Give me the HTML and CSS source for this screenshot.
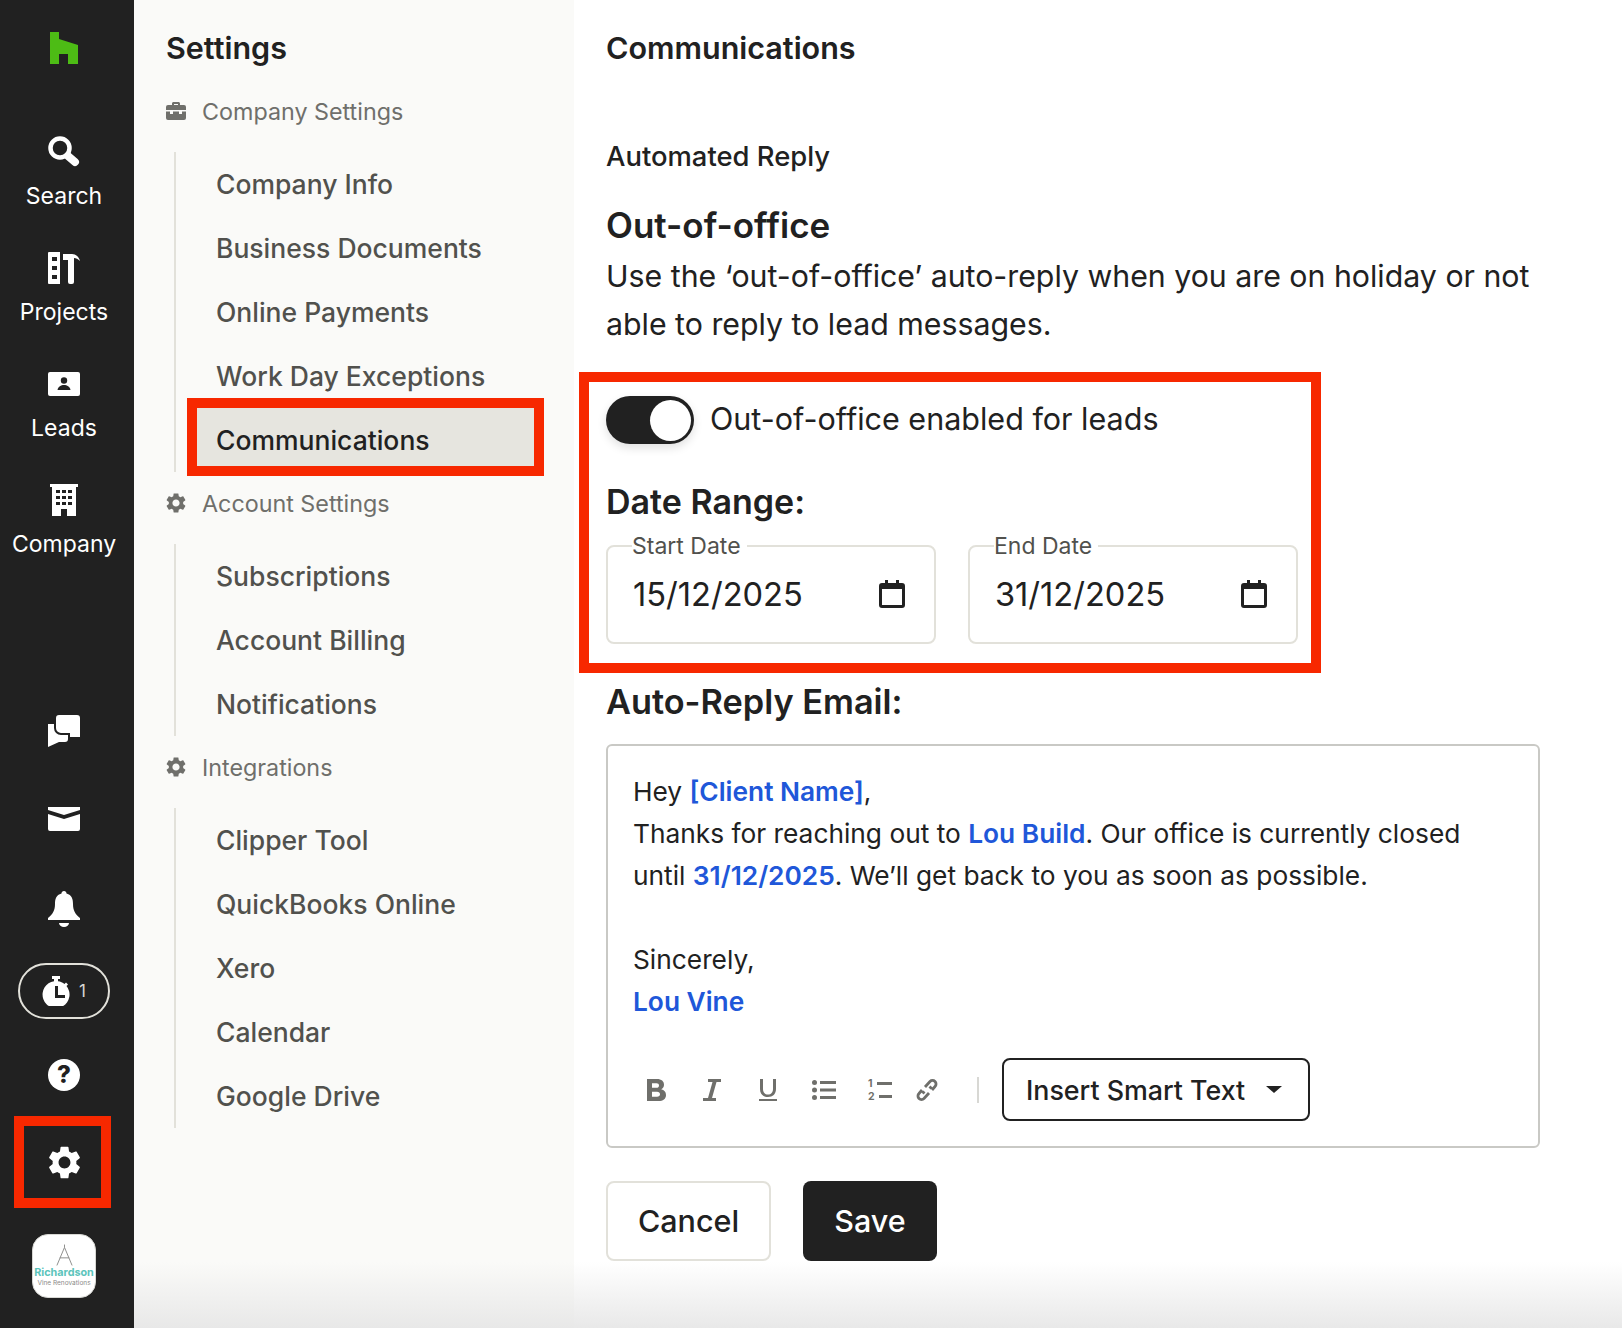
FILE: index.html
```html
<!DOCTYPE html>
<html lang="en">
<head>
    <meta charset="UTF-8">
    <meta name="viewport" content="width=device-width, initial-scale=1.0">
    <title>Communications</title>
    <link rel="stylesheet" href="styles.css">
</head>
<body>
    <svg class="defs" width="0" height="0">
        <symbol id="gear" viewBox="2.5 2 19 20"><path d="M19.14 12.94c.04-.3.06-.61.06-.94 0-.32-.02-.64-.07-.94l2.03-1.58c.18-.14.23-.41.12-.61l-1.92-3.32c-.12-.22-.37-.29-.59-.22l-2.39.96c-.5-.38-1.03-.7-1.62-.94l-.36-2.54c-.04-.24-.24-.41-.48-.41h-3.84c-.24 0-.43.17-.47.41l-.36 2.54c-.59.24-1.13.57-1.62.94l-2.39-.96c-.22-.08-.47 0-.59.22L2.74 8.87c-.12.21-.08.47.12.61l2.03 1.58c-.05.3-.09.63-.09.94s.02.64.07.94l-2.03 1.58c-.18.14-.23.41-.12.61l1.92 3.32c.12.22.37.29.59.22l2.39-.96c.5.38 1.03.7 1.62.94l.36 2.54c.05.24.24.41.48.41h3.84c.24 0 .44-.17.47-.41l.36-2.54c.59-.24 1.13-.56 1.62-.94l2.39.96c.22.08.47 0 .59-.22l1.92-3.32c.12-.22.07-.47-.12-.61l-2.01-1.58zM12 15.6c-1.98 0-3.6-1.62-3.6-3.6s1.62-3.6 3.6-3.6 3.6 1.62 3.6 3.6-1.62 3.6-3.6 3.6z"/></symbol>
        <symbol id="calendar" viewBox="0 0 26 28"><path d="M6 0h3v3h8V0h3v3h3a3 3 0 0 1 3 3v19a3 3 0 0 1-3 3H3a3 3 0 0 1-3-3V6a3 3 0 0 1 3-3h3zM3 9v16h20V9z"/></symbol>
    </svg>

    <div class="app">
        <nav class="rail">
            <svg class="logo" viewBox="0 0 28 32"><path d="M0 0h9v7l19 6v19H18V22H9v10H0z"/></svg>
            <a class="rail-link first">
                <svg class="rail-icon" viewBox="0 0 32 32"><circle cx="12" cy="12" r="9.500" fill="none" stroke="#fff" stroke-width="4.500"/><path d="M20 20l7 6" stroke="#fff" stroke-width="8" stroke-linecap="round"/></svg>
                <span>Search</span>
            </a>
            <a class="rail-link">
                <svg class="rail-icon" viewBox="0 0 32 32"><path fill-rule="evenodd" d="M1 0h11v32H1a1 1 0 0 1-1-1V1a1 1 0 0 1 1-1zm3 5v4h5V5zm0 9v4h5v-4zm0 9v4h5v-4z"/><path d="M15 2h9c4 0 7 3 8 7-2-2-4-3-6-3v24a2 2 0 0 1-2 2h-2a2 2 0 0 1-2-2V8h-5z"/></svg>
                <span>Projects</span>
            </a>
            <a class="rail-link">
                <svg class="rail-icon" viewBox="0 0 32 24"><rect width="32" height="24" rx="2"/><circle cx="16" cy="8.500" r="3.200" fill="#212121"/><path d="M9.500 18c.5-3.500 3.500-5 6.500-5s6 1.500 6.500 5z" fill="#212121"/></svg>
                <span>Leads</span>
            </a>
            <a class="rail-link">
                <svg class="rail-icon" viewBox="0 0 32 32"><path fill-rule="evenodd" d="M2 0h28v3h-2v29H19v-7h-6v7H4V3H2zm6 6v3h4V6zm6 0v3h4V6zm6 0v3h4V6zM8 12v3h4v-3zm6 0v3h4v-3zm6 0v3h4v-3zM8 18v3h4v-3zm6 0v3h4v-3zm6 0v3h4v-3z"/></svg>
                <span>Company</span>
            </a>

            <div class="rail-bottom">
                <svg class="rail-icon chat" viewBox="0 0 32 32"><path d="M11 0h18a3 3 0 0 1 3 3v19H22v-4h-9a5 5 0 0 1-5-5V3a3 3 0 0 1 3-3z"/><path d="M0 9h6v4a7 7 0 0 0 7 7h7v4a3 3 0 0 1-3 3h-6L0 32z"/></svg>
                <svg class="rail-icon mail" viewBox="0 0 32 24"><path d="M0 0h32v3L16 8 0 3z"/><path d="M0 7l16 5 16-5v15a2 2 0 0 1-2 2H2a2 2 0 0 1-2-2z"/></svg>
                <svg class="rail-icon bell" viewBox="0 0 32 36"><path d="M16 0c1.500 0 2.500 1 2.500 2.500C24 4 25 8 25 13c0 6 2 10 7 14v2H0v-2c5-4 7-8 7-14 0-5 1-9 6.500-10.500C13.500 1 14.500 0 16 0z"/><path d="M11 32h10a5 4 0 0 1-10 0z"/></svg>
                <div class="timer">
                    <svg class="timer-icon" viewBox="0 0 28 30"><path d="M10 0h8v3h-2v2.200c2.500.3 4.700 1.300 6.500 2.800l1.500-1.500 2 2-1.500 1.500A13.500 13.500 0 1 1 12 5.200V3h-2z"/><path d="M13 10h3v9h7v3H13z" fill="#212121"/></svg>
                    <span>1</span>
                </div>
                <div class="help">?</div>
                <div class="rail-gear"><svg class="gear-icon"><use href="#gear"/></svg></div>
                <div class="avatar">
                    <svg class="compass" viewBox="0 0 20 24"><path d="M10 1v3M10 4L2 23M10 4l8 19M5 15h10" fill="none" stroke="#8a8a88" stroke-width="1"/></svg>
                    <div class="brand">Richardson</div>
                    <div class="brand-sub">Vine Renovations</div>
                </div>
            </div>
        </nav>

        <aside class="settings">
            <h2>Settings</h2>

            <div class="group-title">
                <svg class="group-icon" viewBox="0 0 20 18"><path d="M6 3V1.500C6 .7 6.700 0 7.500 0h5c.8 0 1.500.7 1.500 1.500V3h4a2 2 0 0 1 2 2v3H0V5a2 2 0 0 1 2-2zm2-1v1h4V2z"/><path d="M0 9.500h4V12h3V9.500h6V12h3V9.500h4V16a2 2 0 0 1-2 2H2a2 2 0 0 1-2-2z"/></svg>
                Company Settings
            </div>
            <ul class="menu">
                <li>Company Info</li>
                <li>Business Documents</li>
                <li>Online Payments</li>
                <li>Work Day Exceptions</li>
                <li class="active">Communications</li>
            </ul>

            <div class="group-title">
                <svg class="group-icon"><use href="#gear"/></svg>
                Account Settings
            </div>
            <ul class="menu">
                <li>Subscriptions</li>
                <li>Account Billing</li>
                <li>Notifications</li>
            </ul>

            <div class="group-title">
                <svg class="group-icon"><use href="#gear"/></svg>
                Integrations
            </div>
            <ul class="menu">
                <li>Clipper Tool</li>
                <li>QuickBooks Online</li>
                <li>Xero</li>
                <li>Calendar</li>
                <li>Google Drive</li>
            </ul>
        </aside>

        <main class="content">
            <h2>Communications</h2>
            <h3 class="sub">Automated Reply</h3>
            <h1>Out-of-office</h1>
            <p class="intro">Use the ‘out-of-office’ auto-reply when you are on holiday or not able to reply to lead messages.</p>

            <section class="marked">
                <div class="toggle-row">
                    <div class="toggle"><div class="knob"></div></div>
                    <span>Out-of-office enabled for leads</span>
                </div>
                <h4 class="date-title">Date Range:</h4>
                <div class="dates">
                    <fieldset class="date-field">
                        <legend>Start Date</legend>
                        <span>15/12/2025</span>
                        <svg class="cal"><use href="#calendar"/></svg>
                    </fieldset>
                    <fieldset class="date-field">
                        <legend>End Date</legend>
                        <span>31/12/2025</span>
                        <svg class="cal"><use href="#calendar"/></svg>
                    </fieldset>
                </div>
            </section>

            <h4 class="email-title">Auto-Reply Email:</h4>
            <div class="editor">
                <div class="body-text">
                    <div>Hey <b>[Client Name]</b>,</div>
                    <div>Thanks for reaching out to <b>Lou Build</b>. Our office is currently closed</div>
                    <div>until <b>31/12/2025</b>. We’ll get back to you as soon as possible.</div>
                    <div class="spacer"></div>
                    <div>Sincerely,</div>
                    <div><b>Lou Vine</b></div>
                </div>
                <div class="toolbar">
                    <svg class="tool t-b" viewBox="0 0 19 22"><path fill-rule="evenodd" d="M0 0h10c4.500 0 7 2.300 7 5.700 0 2.200-1.100 3.800-2.800 4.600 2.900.8 4.800 2.700 4.800 5.600 0 3.900-3 6.100-7.500 6.100H0zm5 4.300v4.500h4.500c1.500 0 2.500-.9 2.500-2.300s-1-2.200-2.500-2.200zm0 8.500v5h5c1.900 0 3-1 3-2.500s-1.100-2.500-3-2.500z"/></svg>
                    <svg class="tool t-i" viewBox="0 0 18 22"><path d="M5 0h13v3h-4.500L9 19h4v3H0v-3h5L9.500 3H5z"/></svg>
                    <svg class="tool t-u" viewBox="0 0 18 22"><path d="M1 0h3v10c0 3.500 2 5.500 5 5.500s5-2 5-5.500V0h3v10c0 5-3.200 8-8 8s-8-3-8-8zM0 20h18v2H0z"/></svg>
                    <svg class="tool t-ul" viewBox="0 0 24 20"><circle cx="2.500" cy="2.500" r="2.500"/><circle cx="2.500" cy="10" r="2.500"/><circle cx="2.500" cy="17.500" r="2.500"/><path d="M8 1h16v3H8zM8 8.500h16v3H8zM8 16h16v3H8z"/></svg>
                    <div class="tool t-ol">
                        <div class="ol-row"><span>1</span><i></i></div>
                        <div class="ol-row"><span>2</span><i></i></div>
                    </div>
                    <svg class="tool t-link" viewBox="0 0 22 24"><path d="M9 9l5-5.500a3.500 3.500 0 0 1 5 5l-3 3.500M13 15l-5 5.500a3.500 3.500 0 0 1-5-5L6 12M8.500 15.500l-2-2M13.500 8.500l2 2" fill="none" stroke="#6f6f6b" stroke-width="2.800"/></svg>
                    <div class="tool-sep"></div>
                    <button class="smart">Insert Smart Text<i class="caret"></i></button>
                </div>
            </div>

            <div class="actions">
                <button class="cancel">Cancel</button>
                <button class="save">Save</button>
            </div>
        </main>
    </div>
    <div class="fade"></div>
</body>
</html>
```

FILE: styles.css
```css
* {
    box-sizing: border-box;
}
body {
    margin: 0;
    font-family: Inter, "Liberation Sans", sans-serif;
    color: #212121;
    background: #fff;
}
.defs {
    position: absolute;
}
.app {
    display: flex;
    height: 1328px;
    overflow: hidden;
}
h1, h2, h3, h4, p, ul {
    margin: 0;
    padding: 0;
}
h2 {
    font-size: 30.5px;
    font-weight: 600;
    line-height: 36px;
    padding-top: 30px;
}

/* left rail */
.rail {
    width: 134px;
    flex: none;
    background: #212121;
    color: #fff;
    display: flex;
    flex-direction: column;
    align-items: center;
    padding-right: 6px;
    fill: #fff;
}
.logo {
    width: 28px;
    height: 32px;
    margin-top: 32px;
    fill: #4dbc15;
}
.rail-link {
    display: flex;
    flex-direction: column;
    align-items: center;
    height: 116px;
    font-size: 23px;
    font-weight: 400;
}
.rail-link.first {
    margin-top: 72px;
}
.rail-link .rail-icon {
    height: 32px;
}
.rail-link span {
    margin-top: 12px;
    line-height: 32px;
}
.rail-icon {
    width: 32px;
    height: 32px;
}
.rail-link:nth-of-type(3) .rail-icon {
    height: 24px;
    margin: 4px 0;
}
.rail-bottom {
    margin-top: auto;
    padding-bottom: 30px;
    display: flex;
    flex-direction: column;
    align-items: center;
}
.mail {
    height: 24px;
    margin-top: 60px;
}
.bell {
    height: 36px;
    margin-top: 60px;
}
.timer {
    margin-top: 36px;
    width: 92px;
    height: 56px;
    border: 2px solid #e2e1da;
    border-radius: 28px;
    display: flex;
    align-items: center;
    justify-content: center;
    gap: 9px;
    font-size: 17px;
    color: #d8d8d4;
}
.timer-icon {
    width: 28px;
    height: 30px;
}
.help {
    margin-top: 40px;
    width: 32px;
    height: 32px;
    border-radius: 50%;
    background: #fff;
    color: #212121;
    font-size: 24px;
    font-weight: 800;
    line-height: 32px;
    text-align: center;
}
.rail-gear {
    margin: 35px 0 0 -4px;
    padding-left: 4px;
    width: 77px;
    height: 72px;
    display: flex;
    align-items: center;
    justify-content: center;
    outline: 10px solid #f72800;
}
.gear-icon {
    width: 33px;
    height: 33px;
}
.avatar {
    margin-top: 36px;
    width: 64px;
    height: 64px;
    border-radius: 16px;
    background: #fff;
    border: 1px solid #d8d8d4;
    display: flex;
    flex-direction: column;
    align-items: center;
    overflow: hidden;
    padding-top: 8px;
}
.compass {
    width: 19px;
    height: 24px;
    flex: none;
}
.brand {
    font-size: 10.8px;
    font-weight: 700;
    color: #5cc4bb;
    line-height: 12px;
    white-space: nowrap;
}
.brand-sub {
    font-size: 6.5px;
    line-height: 8px;
    color: #8a8a88;
    white-space: nowrap;
}

/* settings menu */
.settings {
    width: 440px;
    flex: none;
    background: #fafaf8;
    padding-left: 32px;
}
.settings h2 {
    height: 80px;
    padding-top: 30px;
}
.group-title {
    height: 72px;
    padding-bottom: 10px;
    display: flex;
    align-items: center;
    gap: 16px;
    font-size: 23.3px;
    color: #6f6f6b;
}
.group-icon {
    width: 20px;
    height: 20px;
    flex: none;
    fill: #6f6f6b;
}
.menu {
    list-style: none;
    margin-left: 8px;
    width: 360px;
    border-left: 2px solid #e2e1da;
    padding: 0 0 6px 21px;
    display: flex;
    flex-direction: column;
    gap: 6px;
}
.menu li {
    height: 58px;
    padding: 6px 0 0 19px;
    display: flex;
    align-items: center;
    font-size: 26.5px;
    font-weight: 500;
    color: #51514d;
}
.menu .active {
    background: #e6e5df;
    color: #212121;
    outline: 10px solid #f72800;
}

/* main column */
.content {
    flex: 1;
    padding-left: 32px;
    padding-right: 82px;
}
.sub {
    margin-top: 74px;
    font-size: 27.4px;
    font-weight: 500;
    line-height: 32px;
}
h1 {
    margin-top: 33px;
    font-size: 35px;
    font-weight: 600;
    line-height: 40px;
}
.intro {
    margin-top: 7px;
    font-size: 30.3px;
    line-height: 48px;
}
.marked {
    margin: 34px 0 0 -17px;
    width: 722px;
    height: 281px;
    padding: 14px 0 0 17px;
    outline: 10px solid #f72800;
}
.toggle-row {
    display: flex;
    align-items: center;
    gap: 16px;
    font-size: 30.5px;
}
.toggle-row span {
    margin-top: -4px;
}
.toggle {
    width: 88px;
    height: 48px;
    border-radius: 24px;
    background: #212121;
    display: flex;
    justify-content: flex-end;
    align-items: center;
    padding-right: 3px;
    box-shadow: 0 4px 10px rgba(0, 0, 0, 0.12);
}
.knob {
    width: 41px;
    height: 41px;
    border-radius: 50%;
    background: #fff;
}
.date-title {
    margin-top: 38px;
    font-size: 34px;
    font-weight: 600;
    line-height: 40px;
}
.dates {
    display: flex;
    gap: 32px;
    margin-top: 11px;
}
.date-field {
    width: 330px;
    height: 111px;
    margin: 0;
    padding: 0 29px 0 25px;
    border: 2px solid #e2e1da;
    border-radius: 8px;
    display: flex;
    align-items: center;
    justify-content: space-between;
    font-size: 32.6px;
}
.date-field legend {
    padding: 0 6px 0 0;
    margin-left: -1px;
    font-size: 23px;
    line-height: 26px;
    color: #51514d;
}
.date-field span {
    margin-top: -13px;
}
.cal {
    width: 26px;
    height: 28px;
    margin-top: -13px;
    fill: #212121;
}
.email-title {
    margin-top: 19px;
    font-size: 34.3px;
    font-weight: 600;
    line-height: 40px;
}
.editor {
    margin-top: 22px;
    height: 404px;
    border: 2px solid #c9c9c5;
    border-radius: 6px;
    padding: 25px 25px 0;
}
.body-text {
    font-size: 26.3px;
    line-height: 42px;
}
.body-text b {
    color: #2057d9;
    font-weight: 600;
}
.spacer {
    height: 42px;
}
.toolbar {
    margin-top: 35px;
    display: flex;
    align-items: center;
    fill: #6f6f6b;
}
.tool {
    flex: none;
    height: 22px;
}
.t-b { width: 19px; margin-left: 14px; }
.t-i { width: 18px; margin-left: 37px; }
.t-u { width: 18px; margin-left: 38px; }
.t-ul { width: 24px; margin-left: 35px; height: 20px; }
.t-ol {
    width: 24px;
    height: 26px;
    margin-left: 32px;
    display: flex;
    flex-direction: column;
}
.ol-row {
    display: flex;
    align-items: center;
    gap: 4px;
    height: 13px;
    font-size: 10.5px;
    font-weight: 700;
    line-height: 13px;
    color: #6f6f6b;
}
.ol-row i {
    flex: 1;
    height: 3px;
    background: #6f6f6b;
}
.t-link { width: 22px; margin-left: 24px; height: 24px; }
.tool-sep {
    width: 2px;
    height: 26px;
    margin-left: 39px;
    background: #d8d8d4;
}
.smart {
    margin-left: 23px;
    width: 308px;
    height: 63px;
    border: 2px solid #212121;
    border-radius: 8px;
    background: #fff;
    color: #212121;
    font: 500 26.8px Inter, sans-serif;
    display: flex;
    align-items: center;
    padding-left: 22px;
}
.caret {
    margin-left: 21px;
    border-left: 8px solid transparent;
    border-right: 8px solid transparent;
    border-top: 7px solid #212121;
}
.actions {
    margin-top: 33px;
    display: flex;
    gap: 32px;
}
.actions button {
    height: 80px;
    padding-bottom: 3px;
    border-radius: 8px;
    font: 500 30.5px Inter, sans-serif;
}
.cancel {
    width: 165px;
    background: #fff;
    color: #212121;
    border: 2px solid #e2e1da;
}
.save {
    width: 134px;
    background: #212121;
    color: #fff;
    border: none;
}

/* shadow at the bottom edge of the page */
.fade {
    position: absolute;
    left: 134px;
    right: 0;
    top: 1262px;
    height: 66px;
    background: linear-gradient(rgba(230, 230, 230, 0), rgba(230, 230, 230, 0.9));
}
```
